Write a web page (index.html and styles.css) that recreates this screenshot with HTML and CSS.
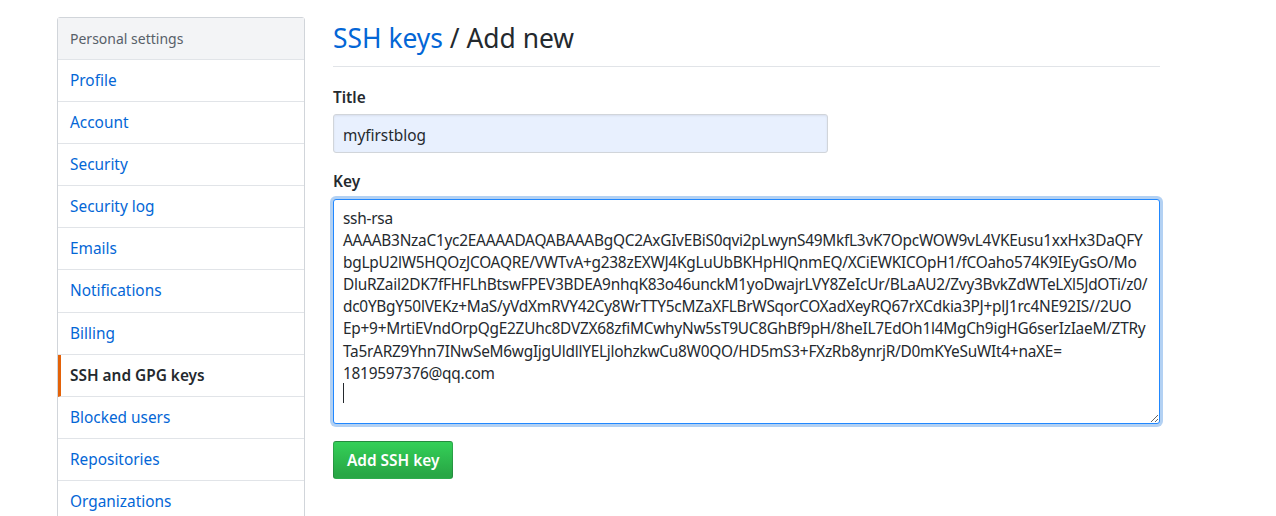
FILE: index.html
```html
<!DOCTYPE html>
<html lang="en">
<head>
  <meta charset="UTF-8">
  <meta name="viewport" content="width=device-width, initial-scale=1.0">
  <title>SSH keys / Add new</title>
  <link rel="stylesheet" href="styles.css">
</head>
<body>
  <div class="container">
    <nav class="menu">
      <h3 class="menu-heading">Personal settings</h3>
      <a class="menu-item" href="#">Profile</a>
      <a class="menu-item" href="#">Account</a>
      <a class="menu-item" href="#">Security</a>
      <a class="menu-item" href="#">Security log</a>
      <a class="menu-item" href="#">Emails</a>
      <a class="menu-item" href="#">Notifications</a>
      <a class="menu-item" href="#">Billing</a>
      <a class="menu-item selected" href="#">SSH and GPG keys</a>
      <a class="menu-item" href="#">Blocked users</a>
      <a class="menu-item" href="#">Repositories</a>
      <a class="menu-item" href="#">Organizations</a>
    </nav>

    <main class="content">
      <div class="subhead">
        <h2 class="subhead-heading"><a href="#">SSH keys</a> / Add new</h2>
      </div>

      <form class="key-form">
        <div class="form-group">
          <label for="title">Title</label>
          <input type="text" id="title" class="form-control title-input" value="myfirstblog">
        </div>
        <div class="form-group key-group">
          <label for="key">Key</label>
          <div class="key-wrap">
            <textarea id="key" class="form-control key-input" wrap="off" spellcheck="false">ssh-rsa
AAAAB3NzaC1yc2EAAAADAQABAAABgQC2AxGIvEBiS0qvi2pLwynS49MkfL3vK7OpcWOW9vL4VKEusu1xxHx3DaQFY
bgLpU2lW5HQOzJCOAQRE/VWTvA+g238zEXWJ4KgLuUbBKHpHlQnmEQ/XCiEWKICOpH1/fCOaho574K9IEyGsO/Mo
DluRZail2DK7fFHFLhBtswFPEV3BDEA9nhqK83o46unckM1yoDwajrLVY8ZeIcUr/BLaAU2/Zvy3BvkZdWTeLXl5JdOTi/z0/
dc0YBgY50lVEKz+MaS/yVdXmRVY42Cy8WrTTY5cMZaXFLBrWSqorCOXadXeyRQ67rXCdkia3PJ+plJ1rc4NE92IS//2UO
Ep+9+MrtiEVndOrpQgE2ZUhc8DVZX68zfiMCwhyNw5sT9UC8GhBf9pH/8heIL7EdOh1l4MgCh9igHG6serIzIaeM/ZTRy
Ta5rARZ9Yhn7INwSeM6wgIjgUldllYELjlohzkwCu8W0QO/HD5mS3+FXzRb8ynrjR/D0mKYeSuWIt4+naXE=
1819597376@qq.com
</textarea>
            <span class="caret"></span>
          </div>
        </div>
        <button type="submit" class="btn-primary">Add SSH key</button>
      </form>
    </main>
  </div>
</body>
</html>
```

FILE: styles.css
```css
body {
  margin: 0;
  font-family: "Segoe UI", "Noto Sans", sans-serif;
  font-size: 15.4px;
  color: #24292e;
  background: #fff;
}
a {
  color: #0366d6;
  text-decoration: none;
}
.container {
  display: flex;
  gap: 28px;
  padding: 17px 0 0 57px;
}

/* left menu */
.menu {
  width: 248px;
  flex-shrink: 0;
  border: 1px solid #d1d5da;
  border-radius: 3px;
  box-sizing: border-box;
  align-self: flex-start;
}
.menu-heading {
  margin: 0;
  padding: 9px 12px 9px;
  font-size: 14px;
  font-weight: 400;
  line-height: 23px;
  color: #586069;
  background: #f3f4f6;
  border-bottom: 1px solid #e1e4e8;
}
.menu-item {
  display: block;
  padding: 9px 12px 8px;
  line-height: 24.1px;
  border-bottom: 1px solid #e1e4e8;
}
.menu-item.selected {
  color: #24292e;
  font-weight: 600;
  padding-left: 9px;
  border-left: 3px solid #e36209;
}

/* main column */
.content {
  width: 827px;
}
.subhead {
  border-bottom: 1px solid #e1e4e8;
  padding-bottom: 8px;
}
.subhead-heading {
  margin: 1px 0 0;
  font-size: 26.4px;
  font-weight: 400;
  line-height: 40px;
}
.form-group {
  margin-top: 20px;
}
.key-group {
  margin-top: 18px;
}
.form-group label {
  display: block;
  font-weight: 600;
  line-height: 22px;
  margin-bottom: 5px;
}
.key-group label {
  margin-bottom: 6px;
}
.form-control {
  font-family: inherit;
  font-size: 15.4px;
  color: #24292e;
  border: 1px solid #d1d5da;
  border-radius: 3px;
  box-sizing: border-box;
  outline: none;
}
.title-input {
  width: 495px;
  height: 39px;
  padding: 3px 9px 0;
  background: #e8f0fe;
  box-shadow: inset 0 1px 2px rgba(27, 31, 35, 0.075);
}
.key-wrap {
  position: relative;
}
.key-input {
  display: block;
  width: 827px;
  height: 225px;
  padding: 8px 9px 6px;
  line-height: 22.1px;
  letter-spacing: -0.25px;
  white-space: pre;
  overflow: hidden;
  resize: vertical;
  border-color: #2188ff;
  box-shadow: 0 0 0 3px rgba(3, 102, 214, 0.3);
}
.caret {
  position: absolute;
  left: 10px;
  top: 184px;
  width: 1px;
  height: 20px;
  background: #24292e;
}
.btn-primary {
  margin-top: 17px;
  height: 38px;
  padding: 0 13px;
  font-family: inherit;
  font-size: 15.4px;
  font-weight: 600;
  color: #fff;
  background: linear-gradient(-180deg, #34d058 0%, #28a745 90%);
  border: 1px solid rgba(27, 31, 35, 0.2);
  border-radius: 3px;
  cursor: pointer;
}
```
